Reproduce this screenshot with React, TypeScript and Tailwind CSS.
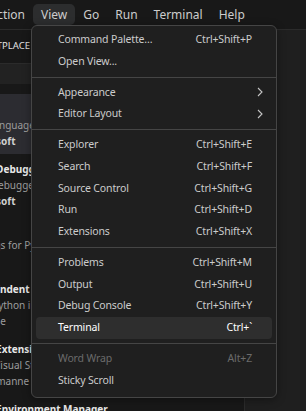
import React from 'react';

type Entry =
  | { kind: 'item'; label: string; shortcut?: string; submenu?: boolean; disabled?: boolean; active?: boolean }
  | { kind: 'sep' };

const menu: Entry[] = [
  { kind: 'item', label: 'Command Palette...', shortcut: 'Ctrl+Shift+P' },
  { kind: 'item', label: 'Open View...' },
  { kind: 'sep' },
  { kind: 'item', label: 'Appearance', submenu: true },
  { kind: 'item', label: 'Editor Layout', submenu: true },
  { kind: 'sep' },
  { kind: 'item', label: 'Explorer', shortcut: 'Ctrl+Shift+E' },
  { kind: 'item', label: 'Search', shortcut: 'Ctrl+Shift+F' },
  { kind: 'item', label: 'Source Control', shortcut: 'Ctrl+Shift+G' },
  { kind: 'item', label: 'Run', shortcut: 'Ctrl+Shift+D' },
  { kind: 'item', label: 'Extensions', shortcut: 'Ctrl+Shift+X' },
  { kind: 'sep' },
  { kind: 'item', label: 'Problems', shortcut: 'Ctrl+Shift+M' },
  { kind: 'item', label: 'Output', shortcut: 'Ctrl+Shift+U' },
  { kind: 'item', label: 'Debug Console', shortcut: 'Ctrl+Shift+Y' },
  { kind: 'item', label: 'Terminal', shortcut: 'Ctrl+`', active: true },
  { kind: 'sep' },
  { kind: 'item', label: 'Word Wrap', shortcut: 'Alt+Z', disabled: true },
  { kind: 'item', label: 'Sticky Scroll' },
];

// the sidebar is scrolled off the left edge, only the tail of each line shows
const extensions = [
  { name: 'Python', desc: 'Python language support with extension access points', publisher: 'Microsoft', verified: true, selected: true },
  { name: 'Python Debugger', desc: 'Python Debugger extension using debugpy.', publisher: 'Microsoft', verified: true },
  { name: 'Pydocs', desc: 'Docstrings for Python functions and classes', publisher: 'Nils' },
  { name: 'Python Indent', desc: 'Correct Python indentation.', publisher: 'Kevin Rose' },
  { name: 'Python Extension Pack', desc: 'Popular Visual Studio Code extensions for Python', publisher: 'Don Jayamanne' },
  { name: 'Python Environment Manager', desc: 'View and manage Python environments', publisher: 'Don Jayamanne' },
];

function Chevron() {
  return (
    <svg width="6" height="10" viewBox="0 0 6 10" fill="none">
      <path d="M1 1l4 4-4 4" stroke="#c5c5c5" strokeWidth="1.1" />
    </svg>
  );
}

export default function App() {
  const font = { fontFamily: '"Noto Sans", "Open Sans", sans-serif' };

  return (
    <div className="relative w-[306px] h-[411px] overflow-hidden bg-[#181818] text-[#cccccc]" style={font}>
      {/* title bar */}
      <div className="h-[30px] flex items-center border-b border-[#2b2b2b] text-[12px] whitespace-nowrap">
        <div className="w-[33px] overflow-hidden flex justify-end shrink-0">
          <span className="pr-2 shrink-0">Selection</span>
        </div>
        <span className="h-[21px] flex items-center px-2 rounded-[5px] bg-[#2c2d2e]">View</span>
        <span className="px-2">Go</span>
        <span className="px-2">Run</span>
        <span className="px-2">Terminal</span>
        <span className="px-2">Help</span>
      </div>

      <div className="flex h-[381px]">
        {/* sidebar */}
        <div className="w-[245px] shrink-0 border-r border-[#2b2b2b] overflow-hidden">
          <div className="h-[33px] flex items-center">
            <div className="w-[30px] overflow-hidden flex justify-end whitespace-nowrap text-[9.5px] text-[#e0e0e0]">
              <span className="shrink-0">EXTENSIONS: MARKETPLACE</span>
            </div>
          </div>
          <div className="h-[21px] border-t border-[#2b2b2b] bg-[#222222]" />
          <div className="h-[10px]" />
          {extensions.map((e) => (
            <div
              key={e.name}
              className={`h-[60px] pt-[7px] whitespace-nowrap leading-[16px] ${e.selected ? 'bg-[#2c2c31]' : ''}`}
            >
              <div className="-ml-[42px] text-[10px] font-bold text-[#e7e7e7]">{e.name}</div>
              <div className="-ml-[45px] text-[10px] text-[#9d9d9d]">{e.desc}</div>
              {e.verified ? (
                <div className="-ml-[32px] text-[10px] font-bold text-[#d0d0d0]">{e.publisher}</div>
              ) : (
                <div className="-ml-[45px] text-[10px] text-[#9d9d9d]">{e.publisher}</div>
              )}
            </div>
          ))}
        </div>
        {/* editor */}
        <div className="flex-1 bg-[#1f1f1f]" />
      </div>

      {/* View menu */}
      <div className="absolute left-[31px] top-[25px] w-[246px] rounded-[6px] border border-[#454545] bg-[#1f1f1f] pt-[3px] pb-[6px] shadow-[0_2px_8px_rgba(0,0,0,0.36)] text-[10.5px] tracking-[-0.15px]">
        {menu.map((m, i) =>
          m.kind === 'sep' ? (
            <div key={i} className="my-[4px] h-px bg-[#454545]" />
          ) : (
            <div
              key={i}
              className={`h-[21.75px] mx-[4px] rounded-[4px] flex items-center pl-[22px] whitespace-nowrap ${
                m.submenu ? 'pr-[9px]' : 'pr-[20px]'
              } ${m.active ? 'bg-[#2e2e2e] text-white' : ''} ${m.disabled ? 'text-[#6b6b6b]' : ''}`}
            >
              <span>{m.label}</span>
              <span className="ml-auto">{m.submenu ? <Chevron /> : m.shortcut}</span>
            </div>
          )
        )}
      </div>
    </div>
  );
}
